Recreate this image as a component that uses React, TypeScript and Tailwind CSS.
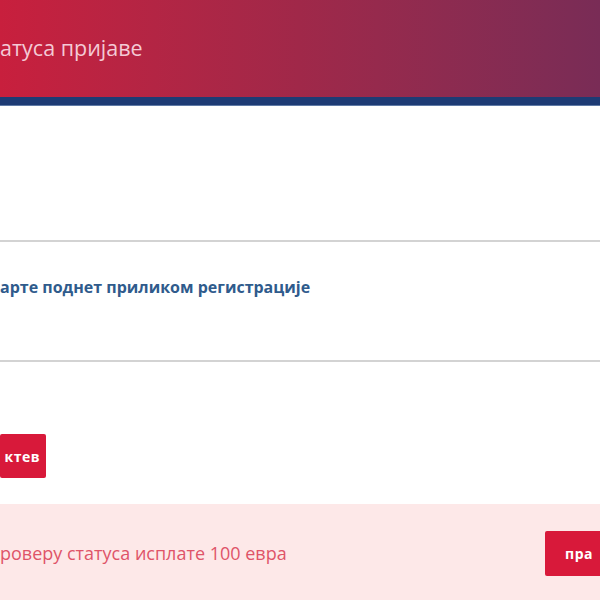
export default function App() {
  return (
    <div className="h-[600px] w-[600px] overflow-hidden bg-white font-['Open_Sans',sans-serif]">
      <header className="flex h-[97px] items-center bg-gradient-to-r from-[#c81f3d] via-[#a02849] to-[#792c56]">
        <h1 className="-mt-[2px] text-[21.5px] font-normal leading-none text-[#f4cad5]">атуса пријаве</h1>
      </header>
      <div className="h-[9px] border-b border-[#5f7aa6] bg-[#1d3b74]" />

      <div className="h-[136px] border-b-2 border-[#d3d3d3]" />

      <div className="h-[120px] border-b-2 border-[#d3d3d3] pt-[34px]">
        <p className="text-[16px] font-bold leading-[22px] text-[#2f5b8c]">
          арте поднет приликом регистрације
        </p>
      </div>

      <div className="h-[142px] pt-[72px]">
        <button className="flex h-[44px] w-[46px] items-center justify-end rounded-[2px] bg-[#d8193a] pr-[6px] text-[14px] font-bold tracking-[0.5px] text-white">
          ктев
        </button>
      </div>

      <div className="flex h-[97px] items-center justify-between bg-[#fde8e8] pt-[1px]">
        <p className="text-[18px] leading-none text-[#df5468]">роверу статуса исплате 100 евра</p>
        <button className="flex h-[45px] w-[55px] items-center justify-start overflow-hidden rounded-l-[2px] bg-[#d8193a] pl-[20px] text-[14px] font-bold tracking-[0.5px] text-white">
          пра
        </button>
      </div>
    </div>
  )
}
